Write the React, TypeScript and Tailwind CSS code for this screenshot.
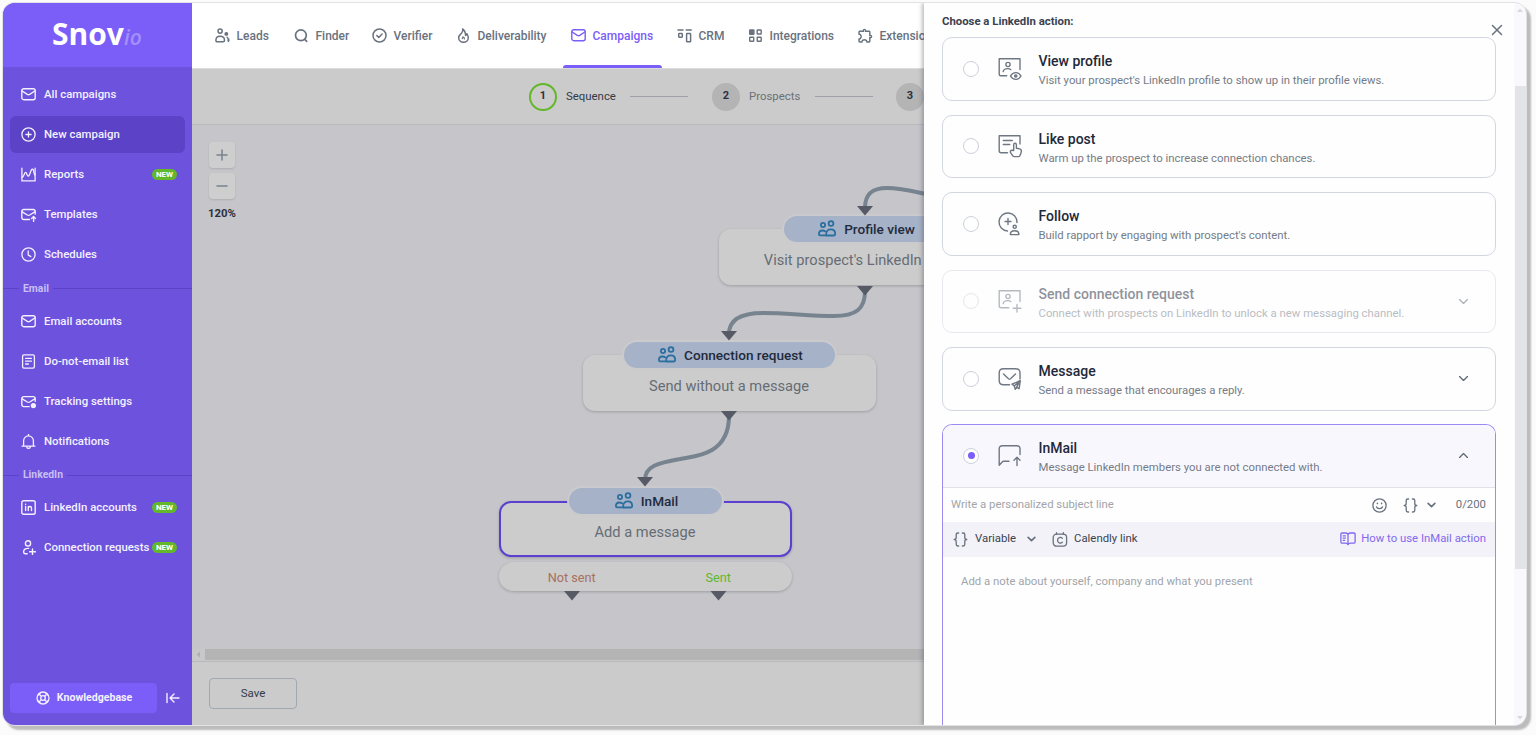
import type { ReactNode } from 'react';
import clsx from 'clsx';
import { MdOutlineExtension } from 'react-icons/md';

type IconProps = { className?: string };

const Svg = ({
  box,
  className,
  width = 1.5,
  children,
}: {
  box: string;
  className?: string;
  width?: number;
  children: ReactNode;
}) => (
  <svg
    viewBox={box}
    className={clsx('block shrink-0', className)}
    fill="none"
    stroke="currentColor"
    strokeWidth={width}
    strokeLinecap="round"
    strokeLinejoin="round"
  >
    {children}
  </svg>
);

const MailIcon = ({ className }: IconProps) => (
  <Svg box="0 0 15 15" className={className} width={1.4}>
    <rect x="0.8" y="1.7" width="13.4" height="11" rx="2" />
    <path d="M1.2 4 6.3 7.4q1.2.7 2.4 0L13.8 4" />
  </Svg>
);

const PlusCircleIcon = ({ className }: IconProps) => (
  <Svg box="0 0 15 15" className={className} width={1.3}>
    <circle cx="7.5" cy="7.5" r="6.6" />
    <path d="M7.5 4.9v5.2M4.9 7.5h5.2" />
  </Svg>
);

const ReportsIcon = ({ className }: IconProps) => (
  <Svg box="0 0 15 15" className={className} width={1.3}>
    <path d="M.9 1.2v12.7h13.2V1.2" />
    <path d="M1.2 10.4C3.2 9 3.4 5.3 4.6 5.3S6 9.2 7.2 9.2s2-4 3.2-6.3c.8-1.3 1.6-.9 2 .2.4 1.5.5 3.5 1.5 4.9" />
  </Svg>
);

const TemplatesIcon = ({ className }: IconProps) => (
  <Svg box="0 0 15 15" className={className} width={1.4}>
    <path d="M8.5 12.5H2.8a2 2 0 0 1-2-2v-6a2 2 0 0 1 2-2h9.4a2 2 0 0 1 2 2V7" />
    <path d="M1.2 4.8 6.3 8q1.2.7 2.4 0l5.1-3.2M12.6 14.4V9.8M10.6 11.5l2-2 2 2" />
  </Svg>
);

const ClockIcon = ({ className }: IconProps) => (
  <Svg box="0 0 15 15" className={className} width={1.3}>
    <circle cx="7.5" cy="7.5" r="6.6" />
    <path d="M7.2 4v3.9l2.6 1.7" />
  </Svg>
);

const ListIcon = ({ className }: IconProps) => (
  <Svg box="0 0 15 15" className={className} width={1.3}>
    <rect x="1.6" y="0.9" width="11.8" height="13.2" rx="1.4" />
    <path d="M4.6 4.4h5.8M4.6 7.2h5.8M4.6 10h2.8" />
  </Svg>
);

const TrackingIcon = ({ className }: IconProps) => (
  <Svg box="0 0 15 15" className={className} width={1.4}>
    <path d="M8.2 12.6H2.8a2 2 0 0 1-2-2v-6a2 2 0 0 1 2-2h9.4a2 2 0 0 1 2 2v2.6" />
    <path d="M1.2 4.8 6.3 8q1.2.7 2.4 0l5.1-3.2" />
    <circle cx="12.4" cy="11.6" r="2" fill="currentColor" />
  </Svg>
);

const BellIcon = ({ className }: IconProps) => (
  <Svg box="0 0 15 15" className={className} width={1.3}>
    <path d="M1 12.1h13M2.6 12V6.8a4.9 4.9 0 0 1 9.8 0V12M7.5 1.7V.5M5.8 13.2c.3 1.6 3.1 1.6 3.4 0" />
  </Svg>
);

const LinkedInIcon = ({ className }: IconProps) => (
  <Svg box="0 0 15 15" className={className} width={1.4}>
    <rect x="0.8" y="0.8" width="13.4" height="13.4" rx="1.8" />
    <path d="M4.6 6.4v4.1M4.6 4.3v.1M7.3 10.5V6.4M7.3 8c.2-2 3.2-2.1 3.2.2v2.3" />
  </Svg>
);

const UserPlusIcon = ({ className }: IconProps) => (
  <Svg box="0 0 15 15" className={className} width={1.4}>
    <circle cx="7" cy="3.4" r="2.6" />
    <path d="M7.6 8.4c-3-.2-4.9.9-5 3.2 0 1.7.5 2.2 1.8 2.2h1.8M11.5 8.9v5.8M8.6 11.8h5.8" />
  </Svg>
);

const LifebuoyIcon = ({ className }: IconProps) => (
  <Svg box="0 0 14 14" className={className} width={1.3}>
    <circle cx="7" cy="7" r="6" />
    <circle cx="7" cy="7" r="2.3" />
    <path d="m2.9 2.9 2.4 2.4M11.1 2.9 8.7 5.3M2.9 11.1l2.4-2.4M11.1 11.1 8.7 8.7" />
    <path d="m4.1 2.4-1.7 1.7M9.9 2.4l1.7 1.7M4.1 11.6 2.4 9.9M9.9 11.6l1.7-1.7" />
  </Svg>
);

const CollapseIcon = ({ className }: IconProps) => (
  <Svg box="0 0 14 12" className={className} width={1.4}>
    <path d="M1 1.4v9.2M13 6H4.2M8 2.1 4 6l4 3.9" />
  </Svg>
);

const LeadsIcon = ({ className }: IconProps) => (
  <Svg box="0 0 15 15" className={className}>
    <circle cx="5.1" cy="3.1" r="2.1" />
    <path d="M.9 12.2C.9 9.3 2.4 8.2 5.1 8.2s4.4 1.1 4.4 4c0 1.1-.4 1.6-1.4 1.6H2.3c-1 0-1.4-.5-1.4-1.6Z" />
    <circle cx="11.3" cy="5.9" r="1.2" fill="currentColor" />
    <path
      d="M12.1 9.2c1.6.4 2 1.8 2 3.3 0 .8-.3 1.2-1 1.3-.4-1.5.3-3-1-4.6Z"
      fill="currentColor"
      strokeWidth="1"
    />
  </Svg>
);

const SearchIcon = ({ className }: IconProps) => (
  <Svg box="0 0 15 15" className={className} width={1.7}>
    <circle cx="6.9" cy="7.3" r="5.4" />
    <path d="m10.8 11.4 1.9 2" />
  </Svg>
);

const CheckCircleIcon = ({ className }: IconProps) => (
  <Svg box="0 0 15 15" className={className}>
    <circle cx="7.5" cy="7.5" r="6.5" />
    <path d="m4.9 7.6 1.9 1.8 3.3-3.4" />
  </Svg>
);

const FlameIcon = ({ className }: IconProps) => (
  <Svg box="0 0 15 15" className={className}>
    <path d="M6.6 1c.6 2.3-.2 3.4-1.4 4.5C3.8 6.9 2.7 7.8 2.7 9.7a4.8 4.5 0 0 0 9.6 0c0-1.7-.6-2.9-1.5-4-.1.9-.5 1.4-1.2 1.7C9.5 4.6 8.8 2.3 6.6 1Z" />
    <path d="M6.2 10.7c.5-.4.7-1 .6-1.8 1.2.3 1.7 1.1 1.6 2" strokeWidth="1.2" />
  </Svg>
);

const CrmIcon = ({ className }: IconProps) => (
  <Svg box="0 0 15 15" className={className}>
    <path d="M1 1.9h5M9.2 1.9h5" />
    <rect x="1.7" y="5.6" width="3.6" height="3.6" rx="0.6" />
    <rect x="9.6" y="5.6" width="4" height="8.2" rx="0.6" />
  </Svg>
);

const GridIcon = ({ className }: IconProps) => (
  <Svg box="0 0 15 15" className={className} width={1.4}>
    <rect x="1.7" y="2" width="4.2" height="4.2" rx="0.5" fill="currentColor" />
    <rect x="9.2" y="2" width="4" height="4" rx="0.5" />
    <rect x="1.7" y="9.3" width="4" height="4" rx="0.5" />
    <rect x="9.2" y="9.3" width="4" height="4" rx="0.5" />
  </Svg>
);

const PuzzleIcon = ({ className }: IconProps) => (
  <MdOutlineExtension className={clsx('scale-[1.15]', className)} />
);

const PeopleIcon = ({ className }: IconProps) => (
  <Svg box="0 0 18 17" className={className} width={1.8}>
    <circle cx="5" cy="5" r="2.1" />
    <circle cx="13" cy="3.5" r="2.4" />
    <path d="M7.6 15.4H2.2c-.9 0-1.3-.4-1.3-1.3 0-2.3 1.3-3.6 3.5-3.6 1.2 0 2.1.3 2.8.9" />
    <path d="M8.6 15.5h7c1.1 0 1.6-.5 1.6-1.5 0-3-1.5-4.7-4.3-4.7-2.9 0-4.7 1.7-4.7 4.7 0 .8-.2 1.5.4 1.5Z" />
  </Svg>
);

const ChevronIcon = ({ className, width = 1.5 }: IconProps & { width?: number }) => (
  <Svg box="0 0 12 8" className={className} width={width}>
    <path d="m1.5 1.8 4.5 4.4 4.5-4.4" />
  </Svg>
);

const BracesIcon = ({ className }: IconProps) => (
  <Svg box="0 0 15 15" className={className} width={1.3}>
    <path d="M5.6 1H4.8C3.6 1 3.2 1.7 3.2 2.8v2.6c0 1.2-.7 2.1-2 2.1 1.3 0 2 .9 2 2.1v2.6c0 1.1.4 1.8 1.6 1.8h.8M9.4 1h.8c1.2 0 1.6.7 1.6 1.8v2.6c0 1.2.7 2.1 2 2.1-1.3 0-2 .9-2 2.1v2.6c0 1.1-.4 1.8-1.6 1.8h-.8" />
  </Svg>
);

const SmileIcon = ({ className }: IconProps) => (
  <Svg box="0 0 15 15" className={className} width={1.3}>
    <circle cx="7.5" cy="7.5" r="6.6" />
    <path d="M4.4 8.8c.9 2.5 5.3 2.5 6.2 0" />
    <path d="M5.4 5.4v.2M9.6 5.4v.2" strokeWidth="1.6" />
  </Svg>
);

const CalendlyIcon = ({ className }: IconProps) => (
  <Svg box="0 0 16 15" className={className} width={1.3}>
    <rect x="1.2" y="2.2" width="13.4" height="12" rx="3.4" />
    <path d="M4.5.7v1.5M11.3.7v1.5M10.3 6.2C8.6 4.6 5.5 5.5 5.5 8.2s3.1 3.7 4.8 2" />
  </Svg>
);

const BookIcon = ({ className }: IconProps) => (
  <Svg box="0 0 16 14" className={className} width={1.3}>
    <path d="M8 2.2C7.2 1.3 6.5 1 5.5 1H2.2C1.3 1 .9 1.4.9 2.3v7.6c0 .9.4 1.3 1.3 1.3h3.3c1.1 0 1.9.4 2.5 1.4.6-1 1.4-1.4 2.5-1.4h3.3c.9 0 1.3-.4 1.3-1.3V2.3c0-.9-.4-1.3-1.3-1.3h-3.3c-1 0-1.7.3-2.5 1.2Zm0 0v10M3.2 3.9h2.2M3.2 6.1h2.2M3.2 8.3h1.4" />
  </Svg>
);

const ViewProfileIcon = ({ className }: IconProps) => (
  <Svg box="0 0 24 24" className={className} width={1.4}>
    <path d="M22 12.5V1.7H1.2v15.5q0 1.5 1.5 1.5h6" />
    <circle cx="10" cy="7.5" r="2.1" />
    <path d="M5.2 14.6c.5-2.5 2.3-3 4.2-3 1.5 0 2.7.2 3.4 1" />
    <path d="M12.5 19c2.6-4.5 8-4.5 10.5 0-2.5 4.5-7.9 4.5-10.5 0Z" />
    <circle cx="17.7" cy="19" r="1.1" fill="currentColor" />
  </Svg>
);

const LikePostIcon = ({ className }: IconProps) => (
  <Svg box="0 0 24 24" className={className} width={1.4}>
    <path d="M22 10V1.7H1.2v15q0 2 2 2h6.3M5.3 6.5h9M5.3 10.5h6.5" />
    <path d="M15.7 16.5v-5.8c0-2 2.6-2 2.7 0v3.5l3.3.7c1.2.3 1.8 1 1.7 2.2-.2 1.7-.7 3.2-1.5 4.6-.3.6-.8.9-1.5.9h-4c-.7 0-1.2-.3-1.7-.9l-2-2.8c-.8-1.2-.2-2.7 1.3-2.6Z" />
  </Svg>
);

const FollowIcon = ({ className }: IconProps) => (
  <Svg box="0 0 24 24" className={className} width={1.4}>
    <path d="M19 10.5A9 9 0 1 0 9.5 19M10 6.500v6M7 9.500h6" />
    <circle cx="16.7" cy="14.8" r="1.6" />
    <path d="M12.3 22.6c0-2.6 1.4-3.9 4.3-3.9s4.3 1.3 4.3 3.9Z" />
  </Svg>
);

const ConnectIcon = ({ className }: IconProps) => (
  <Svg box="0 0 24 24" className={className} width={1.4}>
    <path d="M22 12.5V1.7H1.2v15q0 2 2 2h7.5" />
    <circle cx="10" cy="7.5" r="2.1" />
    <path d="M5.2 14.6c.5-2.5 2.3-3 4.2-3 1.5 0 2.7.2 3.4 1M19 15.5v7.5M15.2 19.3h7.6" />
  </Svg>
);

const MessageIcon = ({ className }: IconProps) => (
  <Svg box="0 0 24 24" className={className} width={1.4}>
    <path d="M22 12V6c0-2.8-1.5-4.3-4.3-4.3H5.5C2.7 1.7 1.2 3.2 1.2 6v7.5c0 2.8 1.5 4.3 4.3 4.3h6" />
    <path d="m5.5 7 5 4.7q1 .8 2 0l5-4.7" />
    <path d="m22.3 13.7-8.3 3.5 2.3 1.7.9 3.3 1.4-1.8 2.5 1.3Z" />
    <path d="m16.4 18.8 5.5-4.7-3.3 6" />
  </Svg>
);

const InMailIcon = ({ className }: IconProps) => (
  <Svg box="0 0 24 24" className={className} width={1.4}>
    <path d="M22 10.5V5c0-2.2-1.1-3.3-3.3-3.3H4.5C2.3 1.7 1.2 2.8 1.2 5v16.3l3.3-3.6q.4-.4 1-.4h5.5" />
    <path d="M19 21.5v-8M16 16.2l3-3 3 3" />
  </Svg>
);

const NewBadge = () => (
  <span className="flex h-[11px] w-[25px] shrink-0 items-center justify-center rounded-full bg-[#62b72b] text-[8px] leading-none font-bold text-white">
    NEW
  </span>
);

type MenuItem = {
  label: string;
  Icon: (props: IconProps) => ReactNode;
  active?: boolean;
  isNew?: boolean;
};

const campaignMenu: MenuItem[] = [
  { label: 'All campaigns', Icon: MailIcon },
  { label: 'New campaign', Icon: PlusCircleIcon, active: true },
  { label: 'Reports', Icon: ReportsIcon, isNew: true },
  { label: 'Templates', Icon: TemplatesIcon },
  { label: 'Schedules', Icon: ClockIcon },
];

const emailMenu: MenuItem[] = [
  { label: 'Email accounts', Icon: MailIcon },
  { label: 'Do-not-email list', Icon: ListIcon },
  { label: 'Tracking settings', Icon: TrackingIcon },
  { label: 'Notifications', Icon: BellIcon },
];

const linkedInMenu: MenuItem[] = [
  { label: 'LinkedIn accounts', Icon: LinkedInIcon, isNew: true },
  { label: 'Connection requests', Icon: UserPlusIcon, isNew: true },
];

const Menu = ({ items }: { items: MenuItem[] }) => (
  <ul className="px-[7px]">
    {items.map(({ label, Icon, active, isNew }) => (
      <li key={label} className="flex h-10 items-center">
        <a
          className={clsx(
            'relative -top-[0.5px] flex h-[37px] w-[175px] items-center rounded-md pr-2 pl-[11px]',
            active && 'bg-[#5b42c6]',
          )}
        >
          <Icon className="size-[15px]" />
          <span className="ml-2 flex-1 text-[11.4px] font-medium whitespace-nowrap">{label}</span>
          {isNew && <NewBadge />}
        </a>
      </li>
    ))}
  </ul>
);

const MenuDivider = ({ label, className }: { label: string; className: string }) => (
  <div className={clsx('flex items-center text-[10.4px] font-bold text-[#c9bff6]', className)}>
    <span className="h-px w-4 bg-[#5b42c6]" />
    <span className="px-1">{label}</span>
    <span className="h-px flex-1 bg-[#5b42c6]" />
  </div>
);

const Sidebar = () => (
  <aside className="flex w-[189px] shrink-0 flex-col bg-[#6c52dc] text-[#f3f0ff]">
    <div className="flex h-16 items-baseline bg-[#7b5df8] pt-[10px] pl-[49px] font-['Open_Sans',sans-serif]">
      <span className="text-[30px] leading-[41px] font-bold text-white">Snov</span>
      <span className="text-[21px] leading-none font-semibold text-[#a390fa] italic">io</span>
    </div>
    <nav className="flex-1 pt-2">
      <Menu items={campaignMenu} />
      <MenuDivider label="Email" className="h-[27px]" />
      <Menu items={emailMenu} />
      <MenuDivider label="LinkedIn" className="h-[26px]" />
      <Menu items={linkedInMenu} />
    </nav>
    <div className="flex items-center pb-3 pl-[7px]">
      <button className="flex h-[30px] w-[147px] items-center justify-center gap-[7px] rounded bg-[#7b5df8] pl-px text-[10.6px] font-bold">
        <LifebuoyIcon className="size-[14px]" />
        Knowledgebase
      </button>
      <CollapseIcon className="ml-[9px] h-3 w-[14px]" />
    </div>
  </aside>
);

const navItems = [
  { label: 'Leads', Icon: LeadsIcon, width: 'w-[79px]' },
  { label: 'Finder', Icon: SearchIcon, width: 'w-[78px]' },
  { label: 'Verifier', Icon: CheckCircleIcon, width: 'w-[84px]' },
  { label: 'Deliverability', Icon: FlameIcon, width: 'w-[115px]' },
  { label: 'Campaigns', Icon: MailIcon, width: 'w-[106px]', active: true },
  { label: 'CRM', Icon: CrmIcon, width: 'w-[71px]' },
  { label: 'Integrations', Icon: GridIcon, width: 'w-[110px]' },
  { label: 'Extensions', Icon: PuzzleIcon, width: 'w-[90px]' },
];

const TopNav = () => (
  <header className="flex h-[66px] shrink-0 border-b border-[#dcdcdc] bg-white pl-[23px]">
    {navItems.map(({ label, Icon, width, active }) => (
      <a
        key={label}
        className={clsx(
          'relative flex shrink-0 items-center gap-[6.5px] text-[12px] font-medium whitespace-nowrap',
          width,
          active ? 'text-[#7b5df8]' : 'text-[#69727e]',
        )}
      >
        <Icon className="size-[15px] shrink-0" />
        {label}
        {active && (
          <span className="absolute bottom-0 -left-2 h-[3px] w-[99px] rounded-t-sm bg-[#7b5df8]" />
        )}
      </a>
    ))}
  </header>
);

const Stepper = () => (
  <div className="flex h-14 shrink-0 items-center border-b border-[#b9b9bc] bg-[#cbcbcb] pl-[337px] text-[11.4px] whitespace-nowrap text-[#6c7178]">
    <span className="flex size-7 shrink-0 items-center justify-center rounded-full border-2 border-[#62b72b] text-[11px] font-bold text-[#2b3140]">
      1
    </span>
    <span className="ml-[9px] w-[50px] text-[#333a47]">Sequence</span>
    <span className="ml-[14px] h-px w-[58px] shrink-0 bg-[#9ea2a8]" />
    <span className="ml-6 flex size-7 shrink-0 items-center justify-center rounded-full bg-[#b4b4b5] text-[11px] font-bold text-[#2b3140]">
      2
    </span>
    <span className="ml-[9px] w-[51px]">Prospects</span>
    <span className="ml-[15px] h-px w-[58px] shrink-0 bg-[#9ea2a8]" />
    <span className="ml-[23px] flex size-7 shrink-0 items-center justify-center rounded-full bg-[#b4b4b5] text-[11px] font-bold text-[#2b3140]">
      3
    </span>
  </div>
);

const flowNodes = [
  {
    title: 'Profile view',
    text: "Visit prospect's LinkedIn profile",
    place: 'left-[526.5px] top-[91px]',
    pill: 'w-[163px]',
  },
  {
    title: 'Connection request',
    text: 'Send without a message',
    place: 'left-[390.5px] top-[217px]',
    pill: 'w-[211px]',
  },
  {
    title: 'InMail',
    text: 'Add a message',
    place: 'left-[306.5px] top-[363px]',
    pill: 'w-[153px]',
    selected: true,
  },
];

const FlowNode = ({ title, text, place, pill, selected }: (typeof flowNodes)[number]) => (
  <div className={clsx('absolute flex w-[293px] flex-col items-center', place)}>
    <div
      className={clsx(
        'z-10 flex h-[26px] items-center justify-center gap-2 rounded-full bg-[#a6b2c8] pt-px pl-[3px] text-[13.6px] font-medium text-[#222b3c] ring-2 ring-[#cbcbcd]',
        pill,
      )}
    >
      <PeopleIcon className="-mt-[2px] h-[17px] w-[18px] text-[#2b6f9f]" />
      {title}
    </div>
    <div
      className={clsx(
        '-mt-[13px] flex h-14 w-full items-center justify-center rounded-xl bg-[#cccccc] pt-[8px] text-[14.65px] whitespace-nowrap text-[#666c75] shadow-[0_1px_3px_rgba(0,0,0,0.2)]',
        selected && 'border-2 border-[#5a3fd0]',
      )}
    >
      {text}
    </div>
  </div>
);

// top centres of the triangular connectors, in canvas coordinates
const arrows = [
  [673, 81],
  [673, 161],
  [537, 206],
  [537, 286],
  [453, 352],
  [380, 466],
  [526.5, 466],
];

const Canvas = () => (
  <div className="relative h-[524px] shrink-0 overflow-hidden bg-[#c5c5ca]">
    <div className="ml-[16.5px] flex w-[27px] flex-col items-center gap-[5px] pt-[17px] text-[#78828e]">
      <button className="flex size-[26px] items-center justify-center rounded bg-[#cecece] shadow-[0_1px_2px_rgba(0,0,0,0.12)]">
        <Svg box="0 0 12 12" className="size-3">
          <path d="M6 1v10M1 6h10" />
        </Svg>
      </button>
      <button className="flex size-[26px] items-center justify-center rounded bg-[#cecece] shadow-[0_1px_2px_rgba(0,0,0,0.12)]">
        <Svg box="0 0 12 12" className="size-3">
          <path d="M1 6h10" />
        </Svg>
      </button>
      <span className="mt-px text-[11.4px] font-bold text-[#2b3140]">120%</span>
    </div>

    {flowNodes.map((node) => (
      <FlowNode key={node.title} {...node} />
    ))}

    <div className="absolute top-[437px] left-[306.5px] flex h-[29px] w-[293px] items-center rounded-full bg-[#cccccc] pt-[2px] text-center text-[12.7px] shadow-[0_1px_3px_rgba(0,0,0,0.2)]">
      <span className="flex-1 text-[#a8705f]">Not sent</span>
      <span className="flex-1 text-[#62b72b]">Sent</span>
    </div>

    <svg className="absolute top-0 left-0 z-20 h-[524px] w-[732px]" viewBox="0 0 732 524">
      <g fill="none" stroke="#778490" strokeWidth="4">
        <path d="M673 83C673 68 681 63 695 63c13 0 25 3 39 6" />
        <path d="M673 166C673 184 664 191 642 191 618 191 594 188 571 188 549 188 537 195 537 209" />
        <path d="M537 291C537 309 530 319 520 325 508 332 497 332 488 334 466 338 453 341 453 355" />
      </g>
      {arrows.map(([x, y]) => (
        <path key={`${x}-${y}`} d={`M${x - 8} ${y}h16l-8 9.5z`} fill="#555a64" />
      ))}
    </svg>
  </div>
);

const Workspace = () => (
  <main className="flex w-[732px] shrink-0 flex-col overflow-hidden">
    <TopNav />
    <Stepper />
    <Canvas />
    <div className="flex h-3 shrink-0 items-start bg-[#c8c8cb]">
      <svg viewBox="0 0 13 11" className="h-[11px] w-[13px]">
        <path d="M8 2.5v6L4.5 5.5z" fill="#b0b0b2" />
      </svg>
      <span className="h-[11px] flex-1 bg-[#b4b4b5]" />
    </div>
    <footer className="flex flex-1 items-center border-t border-[#b9b9bc] bg-[#cbcbcb] pl-[17px]">
      <button className="h-[31px] w-[88px] rounded border border-[#a2a8b1] text-[11.5px] text-[#333a47]">
        Save
      </button>
    </footer>
  </main>
);

type Action = {
  title: string;
  text: string;
  Icon: (props: IconProps) => ReactNode;
  disabled?: boolean;
  expandable?: boolean;
};

const actions: Action[] = [
  {
    title: 'View profile',
    text: "Visit your prospect's LinkedIn profile to show up in their profile views.",
    Icon: ViewProfileIcon,
  },
  {
    title: 'Like post',
    text: 'Warm up the prospect to increase connection chances.',
    Icon: LikePostIcon,
  },
  {
    title: 'Follow',
    text: "Build rapport by engaging with prospect's content.",
    Icon: FollowIcon,
  },
  {
    title: 'Send connection request',
    text: 'Connect with prospects on LinkedIn to unlock a new messaging channel.',
    Icon: ConnectIcon,
    disabled: true,
    expandable: true,
  },
  {
    title: 'Message',
    text: 'Send a message that encourages a reply.',
    Icon: MessageIcon,
    expandable: true,
  },
];

const ActionSummary = ({
  title,
  text,
  Icon,
  checked,
  expandable,
}: Action & { checked?: boolean }) => (
  <>
    <span className="flex size-4 shrink-0 items-center justify-center rounded-full border border-[#ccd0d9] bg-white">
      {checked && <span className="size-[7px] rounded-full bg-[#7b5df8]" />}
    </span>
    <Icon className="ml-[19px] size-6 text-[#6f7783]" />
    <div className="ml-[16.5px] flex-1 pt-[5px] whitespace-nowrap">
      <h3 className="text-[14px] leading-[19px] font-medium text-[#22293a]">{title}</h3>
      <p className="text-[11.35px] leading-[19px] text-[#757c87]">{text}</p>
    </div>
    {expandable && (
      <ChevronIcon
        className={clsx('mr-[26.5px] h-[7px] w-[11px] text-[#5f6874]', checked && 'rotate-180')}
      />
    )}
  </>
);

const InMailEditor = () => (
  <section className="-mt-px flex min-h-0 flex-1 flex-col overflow-hidden rounded-t-[10px] border border-b-0 border-[#9c8af3]">
    <div className="flex h-[63px] shrink-0 items-center border-b border-[#dfe1eb] bg-[#f9f7fe] pl-5">
      <ActionSummary
        title="InMail"
        text="Message LinkedIn members you are not connected with."
        Icon={InMailIcon}
        checked
        expandable
      />
    </div>
    <div className="flex h-[34px] shrink-0 items-center pt-px pr-[9px] pl-2 text-[11.35px] text-[#69727e]">
      <span className="flex-1 text-[#a2a5aa]">Write a personalized subject line</span>
      <SmileIcon className="size-[15px]" />
      <BracesIcon className="ml-4 size-[15px]" />
      <ChevronIcon width={2.2} className="ml-[9px] h-[6px] w-[9px]" />
      <span className="ml-5">0/200</span>
    </div>
    <div className="flex h-[35px] shrink-0 items-center bg-[#f2f2f8] pr-[9px] pl-[10px] text-[11.35px] text-[#3b4350]">
      <BracesIcon className="size-[15px] text-[#69727e]" />
      <span className="ml-[7px]">Variable</span>
      <ChevronIcon width={2.2} className="ml-[11px] h-[6px] w-[9px] text-[#69727e]" />
      <CalendlyIcon className="ml-4 h-[15px] w-4 text-[#69727e]" />
      <span className="ml-[6px] flex-1">Calendly link</span>
      <a className="flex items-center gap-[5px] text-[#8369ee]">
        <BookIcon className="h-[14px] w-4" />
        How to use InMail action
      </a>
    </div>
    <p className="px-[18px] pt-4 text-[11.35px] leading-[17px] text-[#a2a5aa]">
      Add a note about yourself, company and what you present
    </p>
  </section>
);

const ActionDrawer = () => (
  <section className="z-30 flex flex-1 bg-[#fefefe] shadow-[-2px_0_4px_rgba(60,60,80,0.35)]">
    <div className="flex w-[590px] shrink-0 flex-col px-[18px]">
      <div className="flex h-[34px] shrink-0 items-start pt-[9px]">
        <h2 className="flex-1 text-[11.35px] leading-[18px] font-bold text-[#3a4150]">
          Choose a LinkedIn action:
        </h2>
        <Svg box="0 0 12 12" className="relative top-[11.5px] -right-[6.5px] size-3">
          <path d="m1.5 1.5 9 9M10.5 1.5l-9 9" stroke="#69727e" />
        </Svg>
      </div>
      <div className="flex min-h-0 flex-1 flex-col gap-[14px]">
        {actions.map((action) => (
          <div
            key={action.title}
            className={clsx(
              'flex h-[63.5px] shrink-0 items-center rounded-[10px] border border-[#d2d6e1] pl-5',
              action.disabled && 'opacity-50',
            )}
          >
            <ActionSummary {...action} />
          </div>
        ))}
        <InMailEditor />
      </div>
    </div>
    <div className="flex flex-1 flex-col items-center justify-between bg-[#f9f9fd]">
      <svg viewBox="0 0 8 5" className="mt-[5px] h-[5px] w-2">
        <path d="M4 .5 7 4H1z" fill="#d8d9de" />
      </svg>
      <span className="-mt-[96px] h-[483px] w-[11px] translate-y-[11px] bg-[#e2e4e6]" />
      <svg viewBox="0 0 8 5" className="mb-[5px] h-[5px] w-2">
        <path d="M4 4.5 7 1H1z" fill="#d8d9de" />
      </svg>
    </div>
  </section>
);

const App = () => (
  <div className="h-[735px] w-[1536px] overflow-hidden bg-[#fbfbfb] pt-[3px] pl-[3px] font-['Roboto','Liberation_Sans',sans-serif]">
    <div className="h-[722px] w-[1523px] rounded-xl shadow-[0_0_0_1px_#e2e2e2,4px_4px_2px_1px_#bcbcbc]">
      <div className="flex h-full overflow-hidden rounded-xl">
        <Sidebar />
        <Workspace />
        <ActionDrawer />
      </div>
    </div>
  </div>
);

export default App;
